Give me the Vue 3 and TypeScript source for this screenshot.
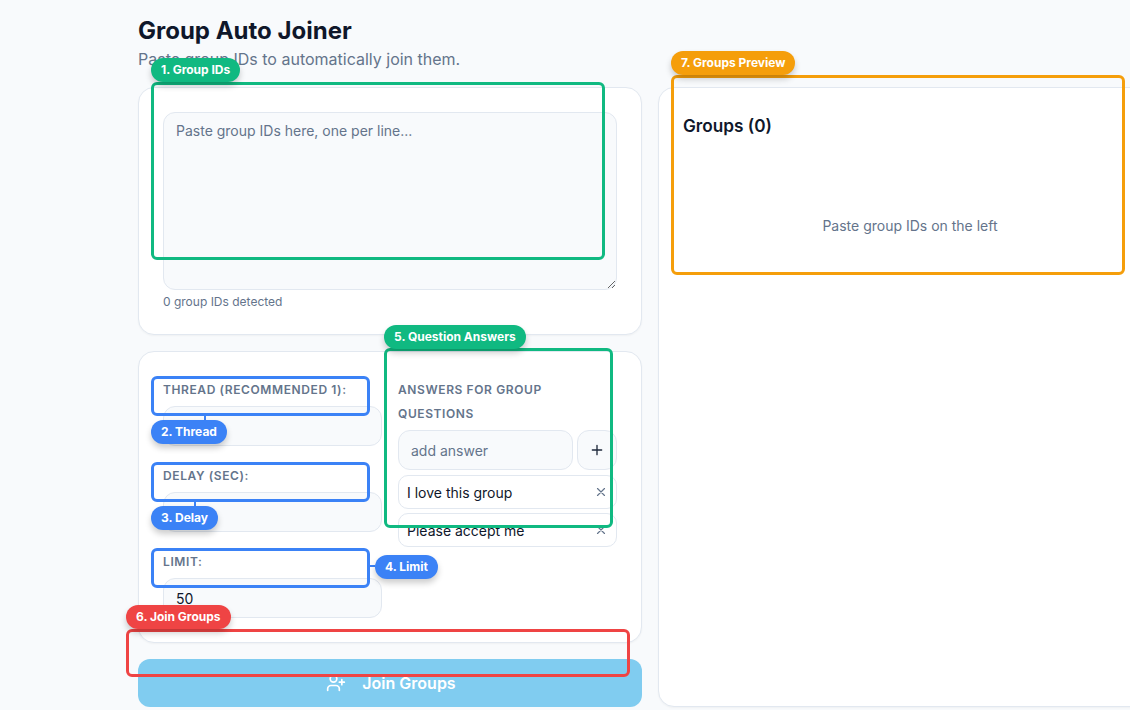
<script setup lang="ts">
interface Marker {
  label: string
  color: string
  box: { left: number; top: number; width: number; height: number }
  badge: { left: number; top: number }
  stem?: { left: number; top: number; width: number; height: number }
}

const answers = ['I love this group', 'Please accept me']

const blue = '#3b82f6'
const green = '#10b981'

// tour highlights, their place on the page is the content
const markers: Marker[] = [
  { label: '1. Group IDs', color: green, box: { left: 151, top: 82, width: 454, height: 178 }, badge: { left: 151, top: 58 } },
  {
    label: '2. Thread', color: blue, box: { left: 151, top: 376, width: 219, height: 40 }, badge: { left: 151, top: 420 },
    stem: { left: 204, top: 416, width: 2, height: 4 },
  },
  {
    label: '3. Delay', color: blue, box: { left: 151, top: 462, width: 219, height: 40 }, badge: { left: 151, top: 506 },
    stem: { left: 194, top: 502, width: 2, height: 4 },
  },
  {
    label: '4. Limit', color: blue, box: { left: 151, top: 548, width: 219, height: 40 }, badge: { left: 375, top: 555 },
    stem: { left: 370, top: 565, width: 5, height: 2 },
  },
  { label: '5. Question Answers', color: green, box: { left: 384, top: 348, width: 229, height: 180 }, badge: { left: 384, top: 325 } },
  { label: '6. Join Groups', color: '#ef4444', box: { left: 126, top: 629, width: 504, height: 48 }, badge: { left: 126, top: 605 } },
  { label: '7. Groups Preview', color: '#f59e0b', box: { left: 671, top: 75, width: 454, height: 200 }, badge: { left: 671, top: 51 } },
]
</script>

<template>
  <div class="page">
    <div class="left">
      <h1>Group Auto Joiner</h1>
      <p class="subtitle">Paste group IDs to automatically join them.</p>

      <section class="card ids-card">
        <textarea class="ids" placeholder="Paste group IDs here, one per line..."></textarea>
        <div class="count">0 group IDs detected</div>
      </section>

      <section class="card settings">
        <div class="fields">
          <div class="field">
            <label>Thread (Recommended 1):</label>
            <input class="input" type="text" />
          </div>
          <div class="field">
            <label>Delay (sec):</label>
            <input class="input" type="text" />
          </div>
          <div class="field">
            <label>Limit:</label>
            <input class="input" type="text" value="50" />
          </div>
        </div>
        <div class="answers">
          <label>Answers for group questions</label>
          <div class="add-row">
            <input class="input" type="text" placeholder="add answer" />
            <button class="add-btn" type="button">
              <svg width="16" height="16" viewBox="0 0 24 24" fill="none" stroke="currentColor" stroke-width="2" stroke-linecap="round">
                <path d="M5 12h14M12 5v14" />
              </svg>
            </button>
          </div>
          <div v-for="answer in answers" :key="answer" class="chip">
            <span>{{ answer }}</span>
            <svg width="14" height="14" viewBox="0 0 24 24" fill="none" stroke="currentColor" stroke-width="2" stroke-linecap="round">
              <path d="M18 6 6 18M6 6l12 12" />
            </svg>
          </div>
        </div>
      </section>

      <button class="join" type="button">
        <svg width="20" height="20" viewBox="0 0 24 24" fill="none" stroke="currentColor" stroke-width="2" stroke-linecap="round" stroke-linejoin="round">
          <path d="M16 21v-2a4 4 0 0 0-4-4H6a4 4 0 0 0-4 4v2" />
          <circle cx="9" cy="7" r="4" />
          <path d="M19 8v6M22 11h-6" />
        </svg>
        Join Groups
      </button>
    </div>

    <section class="card preview">
      <h2>Groups (0)</h2>
      <div class="empty">Paste group IDs on the left</div>
    </section>

    <template v-for="m in markers" :key="m.label">
      <div
        class="hl-box"
        :style="{ left: m.box.left + 'px', top: m.box.top + 'px', width: m.box.width + 'px', height: m.box.height + 'px', borderColor: m.color }"
      ></div>
      <div
        v-if="m.stem"
        class="hl-stem"
        :style="{ left: m.stem.left + 'px', top: m.stem.top + 'px', width: m.stem.width + 'px', height: m.stem.height + 'px', background: m.color }"
      ></div>
      <div class="hl-badge" :style="{ left: m.badge.left + 'px', top: m.badge.top + 'px', background: m.color }">{{ m.label }}</div>
    </template>
  </div>
</template>

<style>
html,
body {
  margin: 0;
  background: #f8fafc;
  overflow: hidden;
}
</style>

<style scoped>
.page {
  position: relative;
  display: flex;
  gap: 16px;
  align-items: stretch;
  width: 1130px;
  height: 710px;
  box-sizing: border-box;
  padding: 16px 0 3px 138px;
  overflow: hidden;
  background: #f8fafc;
  font-family: Inter, "Liberation Sans", sans-serif;
  color: #0f172a;
}

.left {
  flex: 0 0 504px;
  width: 504px;
}

h1 {
  margin: 0;
  font-size: 24px;
  line-height: 30px;
  font-weight: 700;
}

.subtitle {
  margin: 0 0 15px;
  font-size: 16px;
  line-height: 26px;
  color: #64748b;
}

.card {
  box-sizing: border-box;
  background: #fff;
  border: 1px solid #e2e8f0;
  border-radius: 16px;
  box-shadow: 0 1px 2px rgba(0, 0, 0, 0.04);
}

.ids-card {
  height: 248px;
  padding: 24px;
}

.ids {
  display: block;
  box-sizing: border-box;
  width: 100%;
  height: 178px;
  padding: 8px 12px;
  background: #f8fafc;
  border: 1px solid #e2e8f0;
  border-radius: 12px;
  font: 14px/20px Inter, sans-serif;
  color: #0f172a;
  outline: none;
}

.ids::placeholder,
.input::placeholder {
  color: #64748b;
  opacity: 1;
}

.count {
  margin-top: 4px;
  font-size: 12px;
  line-height: 16px;
  color: #64748b;
}

.settings {
  display: flex;
  gap: 16px;
  height: 292px;
  margin-top: 16px;
  padding: 24px;
}

.fields {
  flex: 0 0 219px;
  display: flex;
  flex-direction: column;
  gap: 16px;
}

.field {
  display: flex;
  flex-direction: column;
}

label {
  display: block;
  font-size: 12px;
  line-height: 24px;
  font-weight: 600;
  letter-spacing: 0.6px;
  text-transform: uppercase;
  color: #64748b;
}

.field label {
  height: 30px;
  line-height: 28px;
}

.input {
  box-sizing: border-box;
  width: 100%;
  min-width: 0;
  height: 40px;
  padding: 0 12px;
  background: #f8fafc;
  border: 1px solid #e2e8f0;
  border-radius: 12px;
  font: 14px Inter, sans-serif;
  color: #0f172a;
  outline: none;
}

.answers {
  flex: 1;
  min-width: 0;
  padding-top: 2px;
}

.answers label {
  margin-bottom: 4px;
}

.add-row {
  display: flex;
  gap: 4px;
  margin-bottom: 5px;
}

.add-btn {
  flex: 0 0 40px;
  display: flex;
  align-items: center;
  justify-content: center;
  height: 40px;
  padding: 0;
  background: #f8fafc;
  border: 1px solid #e2e8f0;
  border-radius: 12px;
  color: #1e293b;
}

.chip {
  box-sizing: border-box;
  display: flex;
  align-items: center;
  justify-content: space-between;
  height: 34px;
  margin-bottom: 4px;
  padding: 0 8px;
  background: #fff;
  border: 1px solid #e2e8f0;
  border-radius: 10px;
  font-size: 14px;
  color: #0f172a;
}

.chip svg {
  color: #64748b;
}

.join {
  display: flex;
  align-items: center;
  justify-content: center;
  gap: 16px;
  width: 100%;
  height: 48px;
  margin-top: 16px;
  padding-left: 8px;
  background: #80ccf0;
  border: none;
  border-radius: 12px;
  font: 600 16px Inter, sans-serif;
  color: #fff;
}

.preview {
  flex: 0 0 504px;
  margin-top: 71px;
  padding: 24px;
}

h2 {
  margin: 0;
  font-size: 17.2px;
  line-height: 28px;
  font-weight: 600;
}

.empty {
  margin-top: 76px;
  text-align: center;
  font-size: 14px;
  line-height: 20px;
  color: #64748b;
}

.hl-box {
  position: absolute;
  box-sizing: border-box;
  border: 3px solid;
  border-radius: 6px;
}

.hl-stem {
  position: absolute;
}

.hl-badge {
  position: absolute;
  height: 24px;
  padding: 0 10px;
  border-radius: 12px;
  font-size: 12px;
  line-height: 24px;
  font-weight: 700;
  color: #fff;
  white-space: nowrap;
  box-shadow: 0 4px 6px rgba(0, 0, 0, 0.2);
}
</style>
